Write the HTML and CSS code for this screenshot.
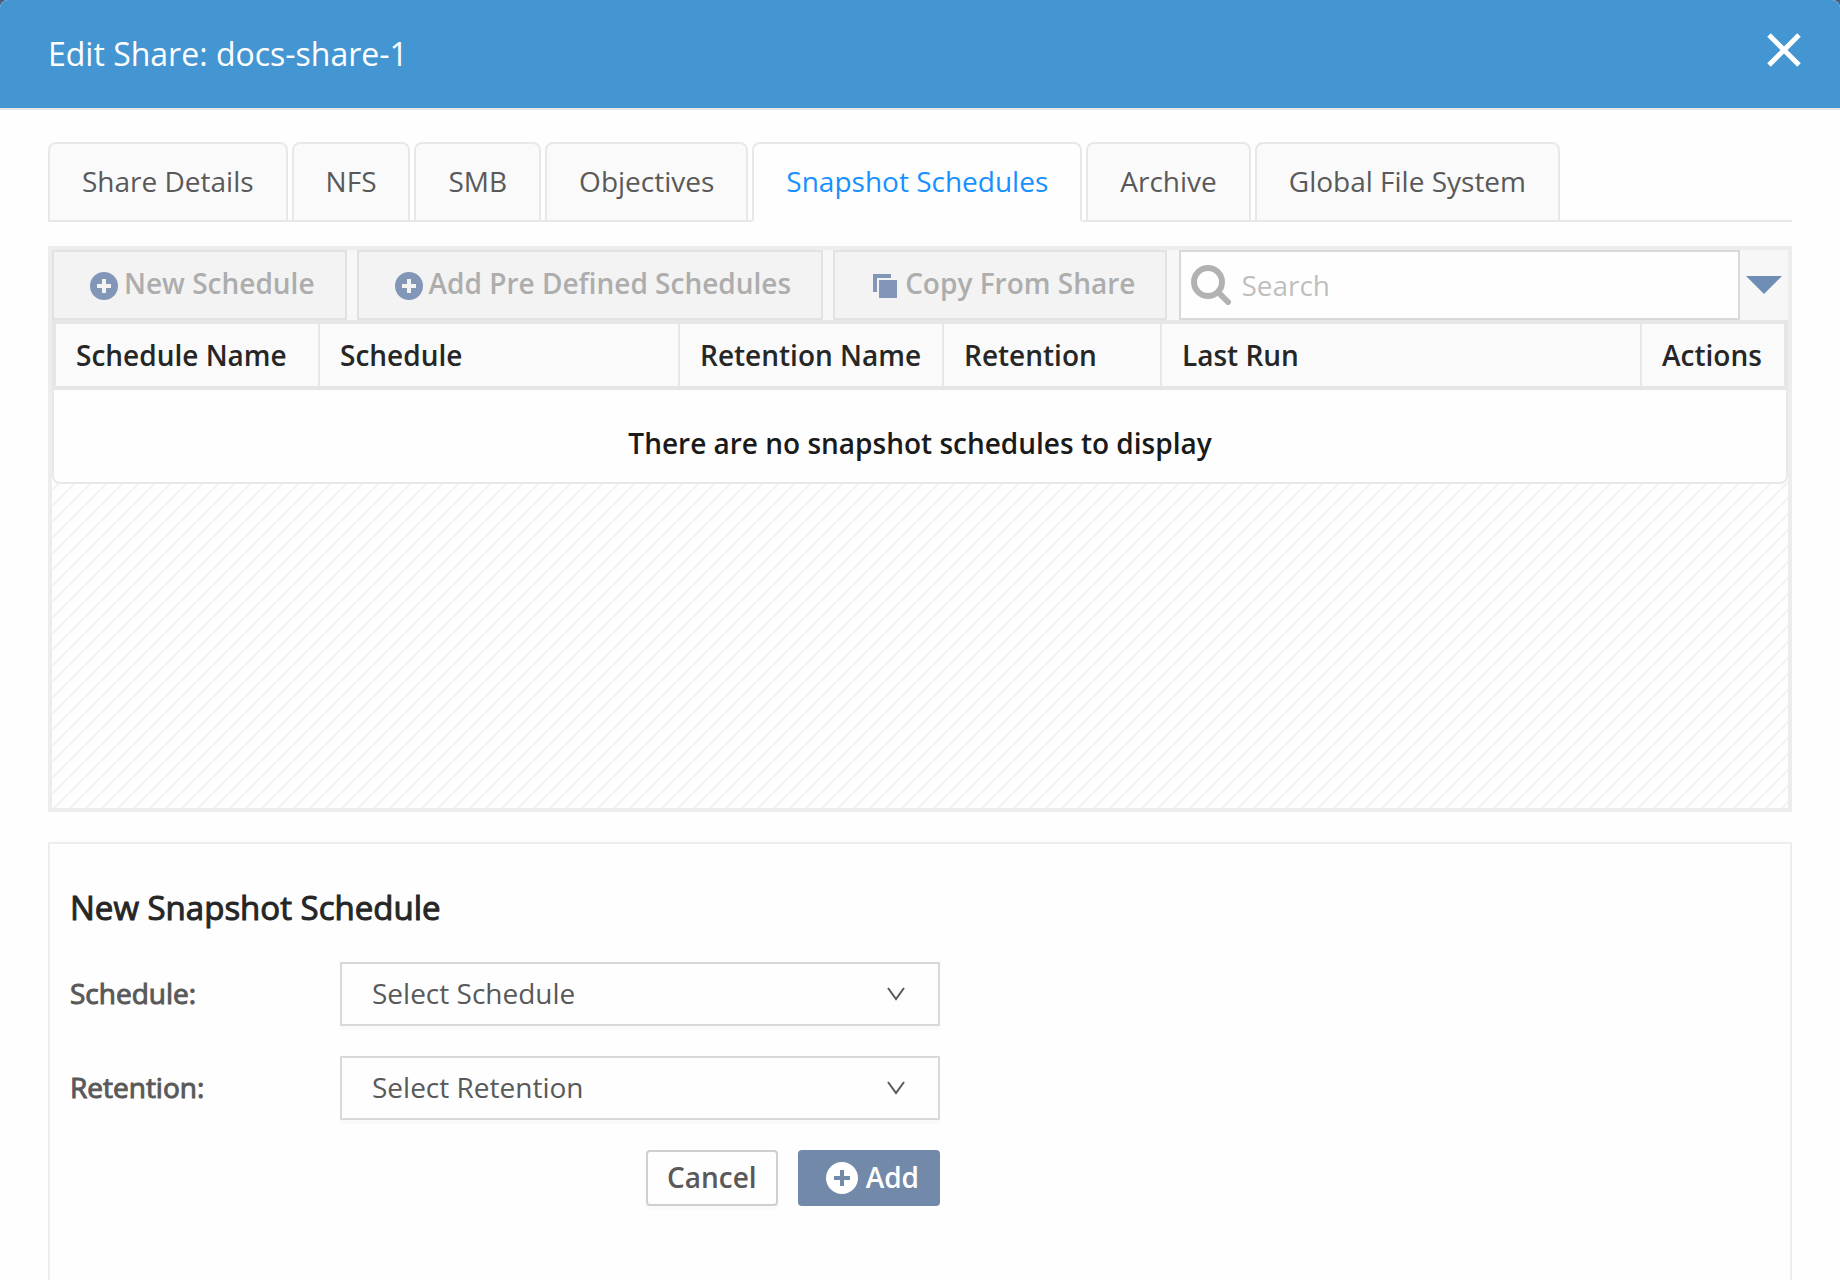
FILE: index.html
```html
<!DOCTYPE html>
<html lang="en">
<head>
<meta charset="utf-8">
<title>Edit Share: docs-share-1</title>
<link rel="stylesheet" href="styles.css">
</head>
<body>
<svg class="sprite" aria-hidden="true">
  <symbol id="plus-circle" viewBox="0 0 32 32">
    <path fill-rule="evenodd" d="M16 0a16 16 0 1 1 0 32a16 16 0 1 1 0-32zM14 8v6H8v4h6v6h4v-6h6v-4h-6V8z"/>
  </symbol>
  <symbol id="plus-circle-bold" viewBox="0 0 28 28">
    <path fill-rule="evenodd" d="M14 0a14 14 0 1 1 0 28a14 14 0 1 1 0-28zM12 7v5H7v4h5v5h4v-5h5v-4h-5V7z"/>
  </symbol>
  <symbol id="chevron" viewBox="0 0 18 14">
    <path d="M1 1l8 11l8-11" fill="none" stroke="currentColor" stroke-width="2"/>
  </symbol>
</svg>
<main class="dialog">
  <header class="dialog-header">
    <h1 class="dialog-title">Edit Share: docs-share-1</h1>
    <button class="close" type="button" aria-label="Close">
      <svg width="34" height="34" viewBox="0 0 34 34"><path d="M2 2l30 30M32 2L2 32" stroke="currentColor" stroke-width="5"/></svg>
    </button>
  </header>
  <div class="dialog-body">
    <nav class="tabs" role="tablist">
      <button class="tab" type="button" role="tab">Share Details</button>
      <button class="tab" type="button" role="tab">NFS</button>
      <button class="tab" type="button" role="tab">SMB</button>
      <button class="tab" type="button" role="tab">Objectives</button>
      <button class="tab tab-active" type="button" role="tab" aria-selected="true">Snapshot Schedules</button>
      <button class="tab" type="button" role="tab">Archive</button>
      <button class="tab" type="button" role="tab">Global File System</button>
    </nav>

    <section class="schedules">
      <div class="toolbar">
        <button class="tool" type="button" disabled><svg class="tool-icon"><use href="#plus-circle-bold"/></svg>New Schedule</button>
        <button class="tool" type="button" disabled><svg class="tool-icon"><use href="#plus-circle-bold"/></svg>Add Pre Defined Schedules</button>
        <button class="tool" type="button" disabled><svg class="tool-icon" viewBox="0 0 28 28"><path d="M2 2h18v4H6v14H2zM8 8h18v18H8z"/></svg>Copy From Share</button>
        <label class="search">
          <svg class="search-icon" viewBox="0 0 40 40" aria-hidden="true"><circle cx="17" cy="17" r="14"/><path d="M28 28l9 9"/></svg>
          <input class="search-input" type="search" placeholder="Search" aria-label="Search">
        </label>
        <button class="more" type="button" aria-label="Search options"><svg width="36" height="18" viewBox="0 0 36 18"><path d="M0 0h36L18 18z"/></svg></button>
      </div>
      <table class="grid">
        <colgroup><col class="c-name"><col class="c-schedule"><col class="c-name"><col class="c-retention"><col><col class="c-actions"></colgroup>
        <thead>
          <tr><th>Schedule Name</th><th>Schedule</th><th>Retention Name</th><th>Retention</th><th>Last Run</th><th>Actions</th></tr>
        </thead>
        <tbody>
          <tr><td colspan="6">There are no snapshot schedules to display</td></tr>
        </tbody>
      </table>
    </section>

    <form class="new-schedule">
      <h2 class="form-title">New Snapshot Schedule</h2>
      <div class="form-row">
        <label class="form-label" for="schedule">Schedule:</label>
        <div class="select-box">
          <select id="schedule"><option>Select Schedule</option></select>
          <svg class="chevron" aria-hidden="true"><use href="#chevron"/></svg>
        </div>
      </div>
      <div class="form-row">
        <label class="form-label" for="retention">Retention:</label>
        <div class="select-box">
          <select id="retention"><option>Select Retention</option></select>
          <svg class="chevron" aria-hidden="true"><use href="#chevron"/></svg>
        </div>
      </div>
      <div class="form-actions">
        <button class="btn" type="button">Cancel</button>
        <button class="btn btn-primary" type="submit"><svg class="btn-icon"><use href="#plus-circle"/></svg>Add</button>
      </div>
    </form>
  </div>
</main>
</body>
</html>
```
FILE: styles.css
```css
* { box-sizing: border-box; }

body {
  margin: 0;
  background: #4a5d80;
  color: #595959;
  font: 28px/44px "Open Sans", sans-serif;
}

button, input, select { font: inherit; color: inherit; margin: 0; }
button { cursor: pointer; }
svg { flex: none; fill: currentColor; }
.sprite { display: none; }

.dialog {
  display: flex;
  flex-direction: column;
  min-height: 100vh;
  background: #fefefe;
  border-radius: 8px 8px 0 0;
  overflow: hidden;
}

.dialog-header {
  display: flex;
  justify-content: space-between;
  align-items: center;
  height: 110px;
  padding: 0 39px 0 48px;
  background: #4496d3;
  border-bottom: 2px solid #e8e8e8;
  color: #fff;
}
.dialog-title { margin: 0; font-size: 32px; font-weight: 400; }
.close {
  display: flex;
  padding: 0 0 8px;
  border: 0;
  background: none;
}

.dialog-body {
  flex: 1;
  display: flex;
  flex-direction: column;
  padding: 32px 48px 0;
}

/* Tabs */
.tabs {
  display: flex;
  gap: 4px;
  box-shadow: inset 0 -2px #e8e8e8;
}
.tab {
  height: 80px;
  padding: 0 32px 2px;
  border: 2px solid #e8e8e8;
  border-radius: 8px 8px 0 0;
  background: #fafafa;
  white-space: nowrap;
}
.tab-active {
  border-bottom-color: #fefefe;
  background: #fefefe;
  color: #1890ff;
}

/* Schedule list */
.schedules {
  min-height: 566px;
  margin-top: 24px;
  border: 4px solid #ededed;
  background: linear-gradient(135deg, transparent 43%, #f4f4f4 47%, #f4f4f4 53%, transparent 57%) 0 0 / 16px 16px;
}
.toolbar {
  display: flex;
  height: 70px;
  background: #f7f7f7;
}
.tool {
  display: flex;
  align-items: center;
  margin-right: 10px;
  padding: 0 30px 4px 36px;
  border: 2px solid #e2e2e2;
  background: #f3f3f3;
  color: #adadad;
  font-weight: 600;
  white-space: nowrap;
}
.tool-icon {
  width: 28px;
  height: 28px;
  margin: 6px 6px 0 0;
  color: #8296b7;
}
.search {
  flex: 1;
  display: flex;
  align-items: center;
  gap: 10px;
  min-width: 0;
  margin-left: 2px;
  padding-left: 10px;
  border: 2px solid #d9d9d9;
  background: #fefefe;
  color: #b2b2b2;
}
.search-icon {
  width: 40px;
  height: 40px;
  fill: none;
  stroke: currentColor;
  stroke-width: 6;
  stroke-linecap: round;
}
.search-input {
  flex: 1;
  min-width: 0;
  padding: 0;
  border: 0;
  outline: 0;
  background: none;
  color: #595959;
}
.search-input::placeholder { color: #bfbfbf; }
.more {
  display: flex;
  align-items: center;
  padding: 0 6px;
  border: 0;
  background: none;
  color: #708db5;
}

.grid {
  width: 100%;
  table-layout: fixed;
  border-collapse: separate;
  border-spacing: 0;
}
.c-name { width: 264px; }
.c-name:first-child { width: 268px; }
.c-schedule { width: 360px; }
.c-retention { width: 218px; }
.c-actions { width: 146px; }
.grid th {
  height: 70px;
  padding: 0 0 0 20px;
  border: solid #e6e6e6;
  border-width: 4px 2px 4px 0;
  background: #fafafa;
  color: #262626;
  font-weight: 600;
  text-align: left;
  white-space: nowrap;
}
.grid th:first-child { border-left-width: 4px; }
.grid th:last-child { border-right-width: 4px; }
.grid td {
  height: 94px;
  padding: 14px 0 0;
  border: 2px solid #e8e8e8;
  border-top: 0;
  border-radius: 0 0 8px 8px;
  background: #fefefe;
  color: #1a1a1a;
  font-weight: 600;
  text-align: center;
}

/* New schedule form */
.new-schedule {
  flex: 1;
  margin-top: 30px;
  padding: 42px 20px;
  border: 2px solid #ededed;
  border-bottom: 0;
}
.form-title {
  margin: 0 0 32px;
  color: #262626;
  font-size: 33px;
  font-weight: 400;
  -webkit-text-stroke: 1px currentColor;
}
.form-row {
  display: grid;
  grid-template-columns: 270px 600px;
  align-items: center;
  margin-bottom: 30px;
}
.form-label {
  padding-bottom: 2px;
  -webkit-text-stroke: 1px currentColor;
}
.select-box {
  display: grid;
  align-items: center;
}
.select-box > * { grid-area: 1 / 1; }
.select-box select {
  appearance: none;
  width: 100%;
  height: 64px;
  padding: 0 64px 2px 30px;
  border: 2px solid #d9d9d9;
  border-radius: 0;
  background: #fefefe;
  box-shadow: 0 4px #fafafa;
}
.chevron {
  justify-self: end;
  width: 18px;
  height: 14px;
  margin-right: 35px;
  pointer-events: none;
}

.form-actions {
  display: flex;
  justify-content: flex-end;
  gap: 20px;
  width: 870px;
}
.btn {
  display: flex;
  align-items: center;
  height: 56px;
  padding: 0 19px 2px;
  border: 2px solid #cfcfcf;
  border-radius: 4px;
  background: #fefefe;
  box-shadow: 0 4px #fafafa;
  font-weight: 600;
}
.btn-primary {
  padding-left: 26px;
  border-color: #7389aa;
  background: #7389aa;
  box-shadow: none;
  color: #fff;
}
.btn-icon { width: 32px; height: 32px; margin: 2px 8px 0 0; }
```
